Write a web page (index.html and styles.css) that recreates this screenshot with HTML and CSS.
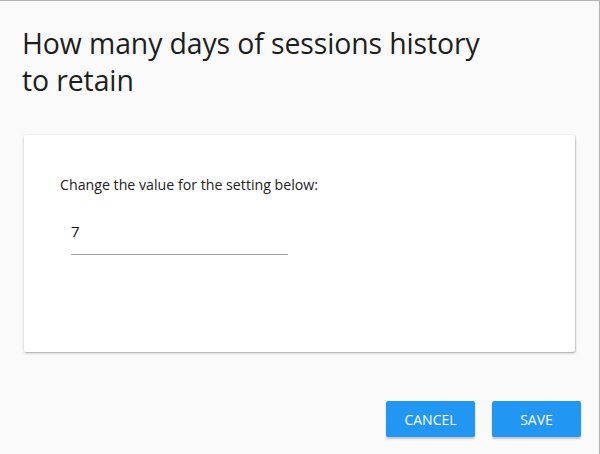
FILE: index.html
```html
<!DOCTYPE html>
<html>
<head>
<meta charset="utf-8">
<link rel="stylesheet" href="styles.css">
</head>
<body>
<div class="dialog">
  <h1 class="title">How many days of sessions history to retain</h1>
  <div class="card">
    <p class="label">Change the value for the setting below:</p>
    <div class="field"><span class="value">7</span></div>
  </div>
  <div class="actions">
    <button class="btn">CANCEL</button>
    <button class="btn">SAVE</button>
  </div>
</div>
</body>
</html>
```

FILE: styles.css
```css
html, body {
  margin: 0;
  padding: 0;
  width: 600px;
  height: 454px;
  overflow: hidden;
  background: #fafafa;
}
.dialog {
  box-sizing: border-box;
  width: 600px;
  height: 454px;
  border-top: 1px solid #b4b4b4;
  border-right: 1px solid #b4b4b4;
  font-family: "Open Sans", "Noto Sans", sans-serif;
  color: #222;
  padding: 24px 24px 0 24px;
  display: flex;
  flex-direction: column;
}
.title {
  margin: 0 0 0 -2px;
  max-width: 490px;
  font-weight: 400;
  font-size: 28.4px;
  line-height: 37px;
  color: #1e1e1e;
  letter-spacing: -0.1px;
}
.card {
  margin-top: 36px;
  height: 217px;
  background: #fff;
  box-shadow: 0 1px 3px rgba(0,0,0,0.25), 1px 1px 1px rgba(0,0,0,0.12);
  border-radius: 2px;
  padding: 40px 36px 0 36px;
  box-sizing: border-box;
}
.label {
  margin: 0;
  font-size: 14.2px;
  line-height: 20px;
  color: #222;
}
.field {
  margin-top: 22px;
  margin-left: 11px;
  width: 217px;
  height: 38px;
  border-bottom: 1px solid #9e9e9e;
  box-sizing: border-box;
  display: flex;
  align-items: flex-start;
  padding-top: 4px;
}
.value {
  font-size: 15px;
  line-height: 20px;
  color: #111;
}
.actions {
  margin-top: 49px;
  margin-right: -6px;
  display: flex;
  justify-content: flex-end;
  gap: 17px;
}
.btn {
  width: 89px;
  height: 36px;
  border: none;
  border-radius: 2px;
  background: #2196f3;
  color: #fff;
  font-family: "Open Sans", "Noto Sans", sans-serif;
  font-size: 14px;
  box-shadow: 0 2px 2px rgba(0,0,0,0.22);
  padding: 0;
}
```
